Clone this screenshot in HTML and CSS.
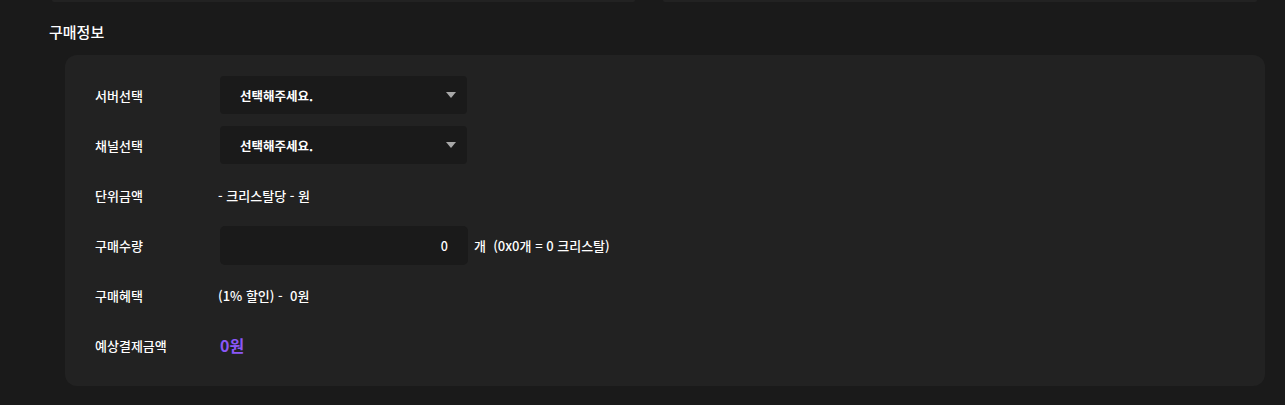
FILE: index.html
```html
<!DOCTYPE html>
<html lang="ko">
<head>
    <meta charset="UTF-8">
    <meta name="viewport" content="width=device-width, initial-scale=1.0">
    <title>구매정보</title>
    <link rel="stylesheet" href="styles.css">
</head>
<body>
    <div class="top-strip">
        <div class="strip-box wide"></div>
        <div class="strip-box"></div>
    </div>

    <div class="section">
        <h3 class="section-title">구매정보</h3>
        <div class="card">
            <div class="row">
                <div class="label">서버선택</div>
                <div class="select">
                    <span>선택해주세요.</span>
                    <span class="arrow"></span>
                </div>
            </div>
            <div class="row">
                <div class="label">채널선택</div>
                <div class="select">
                    <span>선택해주세요.</span>
                    <span class="arrow"></span>
                </div>
            </div>
            <div class="row">
                <div class="label">단위금액</div>
                <div class="value">- 크리스탈당 - 원</div>
            </div>
            <div class="row">
                <div class="label">구매수량</div>
                <div class="input">0</div>
                <div class="value unit">개 &nbsp;(0x0개 = 0 크리스탈)</div>
            </div>
            <div class="row">
                <div class="label">구매혜택</div>
                <div class="value">(1% 할인) - &nbsp;0원</div>
            </div>
            <div class="row">
                <div class="label">예상결제금액</div>
                <div class="value total">0원</div>
            </div>
        </div>
    </div>
</body>
</html>
```

FILE: styles.css
```css
body {
    margin: 0;
    background-color: #1a1a1a;
    font-family: "Noto Sans CJK KR", "Noto Sans", sans-serif;
    color: #ffffff;
    height: 405px;
    overflow: hidden;
}
.top-strip {
    display: flex;
    gap: 28px;
    padding-left: 52px;
    height: 2px;
}
.strip-box {
    width: 594px;
    height: 2px;
    background: #222222;
    border-radius: 0 0 6px 6px;
}
.strip-box.wide {
    width: 583px;
}
.section {
    padding: 0 20px 0 65px;
}
.section-title {
    margin: 19px 0 0 -16px;
    height: 34px;
    font-size: 15px;
    font-weight: 500;
    line-height: 22px;
}
.card {
    background: #222222;
    border-radius: 12px;
    padding: 21px 30px 22px 30px;
    display: flex;
    flex-direction: column;
    gap: 12px;
}
.row {
    display: flex;
    align-items: center;
    height: 38px;
    font-size: 13px;
}
.label {
    width: 123px;
    flex-shrink: 0;
    font-weight: 500;
}
.select {
    width: 247px;
    height: 38px;
    box-sizing: border-box;
    background: #1a1a1a;
    border-radius: 4px;
    padding: 0 11px 0 20px;
    margin-left: 2px;
    display: flex;
    align-items: center;
    justify-content: space-between;
    font-size: 12.5px;
    font-weight: 600;
}
.arrow {
    width: 0;
    height: 0;
    border-left: 5px solid transparent;
    border-right: 5px solid transparent;
    border-top: 6px solid #a8a8a8;
}
.input {
    width: 248px;
    height: 39px;
    box-sizing: border-box;
    background: #1a1a1a;
    border-radius: 5px;
    padding-right: 20px;
    margin-left: 2px;
    display: flex;
    align-items: center;
    justify-content: flex-end;
    font-size: 12.5px;
    font-weight: 500;
}
.value {
    font-size: 13px;
    font-weight: 500;
}
.unit {
    margin-left: 6px;
}
.total {
    color: #8b57f7;
    font-size: 16px;
    font-weight: 700;
    margin-left: 2px;
}
```
